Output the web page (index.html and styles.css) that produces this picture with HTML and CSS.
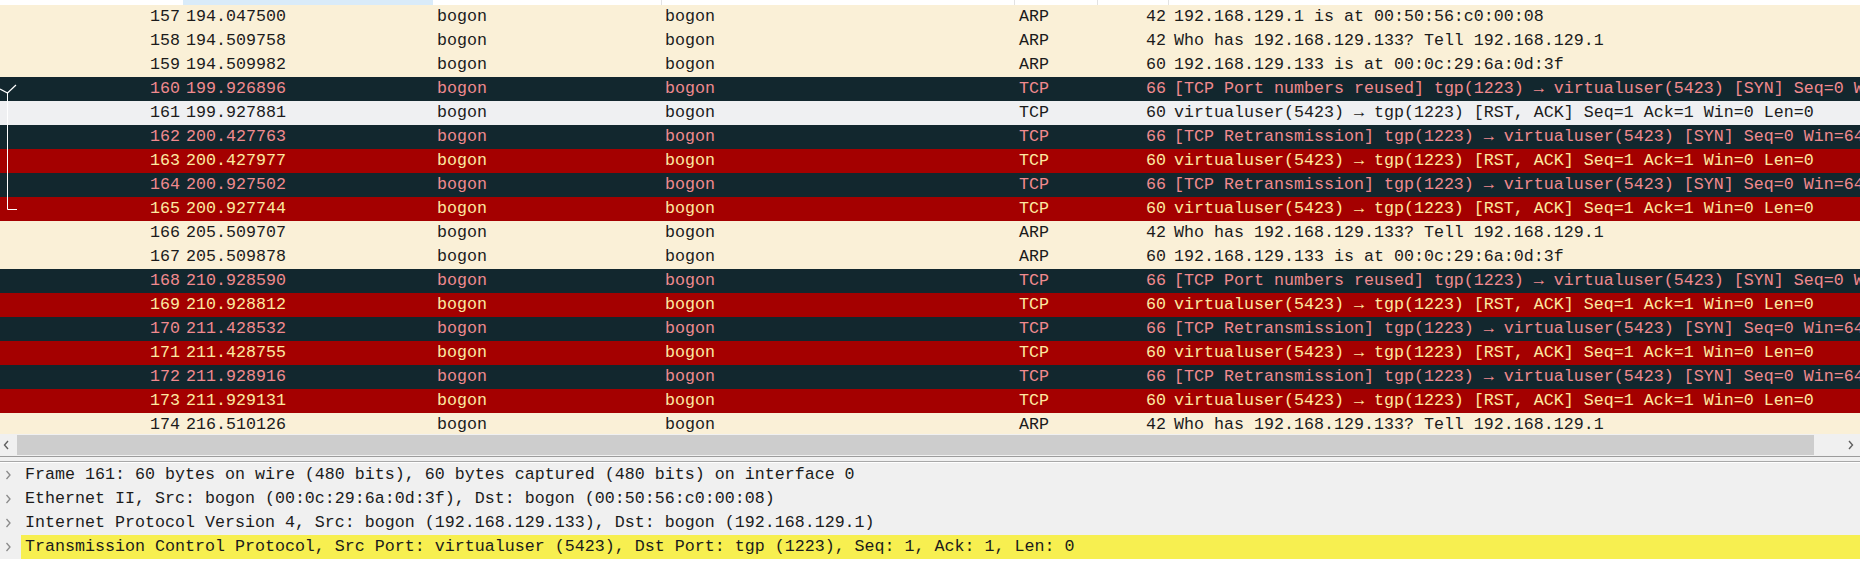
FILE: index.html
```html
<!DOCTYPE html>
<html>
<head>
<meta charset="utf-8">
<link rel="stylesheet" href="styles.css">
</head>
<body>
<div class="packets">
  <div class="cols head">
    <span></span><span class="sorted"></span><span class="sep"></span><span class="sep"></span><span class="sep"></span><span class="sep"></span><span></span>
  </div>
  <div class="cols row arp"><span class="no">157</span><span class="time">194.047500</span><span class="src">bogon</span><span class="dst">bogon</span><span class="proto">ARP</span><span class="len">42</span><span class="info">192.168.129.1 is at 00:50:56:c0:00:08</span></div>
  <div class="cols row arp"><span class="no">158</span><span class="time">194.509758</span><span class="src">bogon</span><span class="dst">bogon</span><span class="proto">ARP</span><span class="len">42</span><span class="info">Who has 192.168.129.133? Tell 192.168.129.1</span></div>
  <div class="cols row arp"><span class="no">159</span><span class="time">194.509982</span><span class="src">bogon</span><span class="dst">bogon</span><span class="proto">ARP</span><span class="len">60</span><span class="info">192.168.129.133 is at 00:0c:29:6a:0d:3f</span></div>
  <div class="cols row bad"><span class="no">160</span><span class="time">199.926896</span><span class="src">bogon</span><span class="dst">bogon</span><span class="proto">TCP</span><span class="len">66</span><span class="info">[TCP Port numbers reused] tgp(1223) → virtualuser(5423) [SYN] Seq=0 Win=64240 Len=0 MSS=1460 WS=256 SACK_PERM</span></div>
  <div class="cols row selected"><span class="no">161</span><span class="time">199.927881</span><span class="src">bogon</span><span class="dst">bogon</span><span class="proto">TCP</span><span class="len">60</span><span class="info">virtualuser(5423) → tgp(1223) [RST, ACK] Seq=1 Ack=1 Win=0 Len=0</span></div>
  <div class="cols row bad"><span class="no">162</span><span class="time">200.427763</span><span class="src">bogon</span><span class="dst">bogon</span><span class="proto">TCP</span><span class="len">66</span><span class="info">[TCP Retransmission] tgp(1223) → virtualuser(5423) [SYN] Seq=0 Win=64240 Len=0 MSS=1460 WS=256 SACK_PERM</span></div>
  <div class="cols row rst"><span class="no">163</span><span class="time">200.427977</span><span class="src">bogon</span><span class="dst">bogon</span><span class="proto">TCP</span><span class="len">60</span><span class="info">virtualuser(5423) → tgp(1223) [RST, ACK] Seq=1 Ack=1 Win=0 Len=0</span></div>
  <div class="cols row bad"><span class="no">164</span><span class="time">200.927502</span><span class="src">bogon</span><span class="dst">bogon</span><span class="proto">TCP</span><span class="len">66</span><span class="info">[TCP Retransmission] tgp(1223) → virtualuser(5423) [SYN] Seq=0 Win=64240 Len=0 MSS=1460 WS=256 SACK_PERM</span></div>
  <div class="cols row rst"><span class="no">165</span><span class="time">200.927744</span><span class="src">bogon</span><span class="dst">bogon</span><span class="proto">TCP</span><span class="len">60</span><span class="info">virtualuser(5423) → tgp(1223) [RST, ACK] Seq=1 Ack=1 Win=0 Len=0</span></div>
  <div class="cols row arp"><span class="no">166</span><span class="time">205.509707</span><span class="src">bogon</span><span class="dst">bogon</span><span class="proto">ARP</span><span class="len">42</span><span class="info">Who has 192.168.129.133? Tell 192.168.129.1</span></div>
  <div class="cols row arp"><span class="no">167</span><span class="time">205.509878</span><span class="src">bogon</span><span class="dst">bogon</span><span class="proto">ARP</span><span class="len">60</span><span class="info">192.168.129.133 is at 00:0c:29:6a:0d:3f</span></div>
  <div class="cols row bad"><span class="no">168</span><span class="time">210.928590</span><span class="src">bogon</span><span class="dst">bogon</span><span class="proto">TCP</span><span class="len">66</span><span class="info">[TCP Port numbers reused] tgp(1223) → virtualuser(5423) [SYN] Seq=0 Win=64240 Len=0 MSS=1460 WS=256 SACK_PERM</span></div>
  <div class="cols row rst"><span class="no">169</span><span class="time">210.928812</span><span class="src">bogon</span><span class="dst">bogon</span><span class="proto">TCP</span><span class="len">60</span><span class="info">virtualuser(5423) → tgp(1223) [RST, ACK] Seq=1 Ack=1 Win=0 Len=0</span></div>
  <div class="cols row bad"><span class="no">170</span><span class="time">211.428532</span><span class="src">bogon</span><span class="dst">bogon</span><span class="proto">TCP</span><span class="len">66</span><span class="info">[TCP Retransmission] tgp(1223) → virtualuser(5423) [SYN] Seq=0 Win=64240 Len=0 MSS=1460 WS=256 SACK_PERM</span></div>
  <div class="cols row rst"><span class="no">171</span><span class="time">211.428755</span><span class="src">bogon</span><span class="dst">bogon</span><span class="proto">TCP</span><span class="len">60</span><span class="info">virtualuser(5423) → tgp(1223) [RST, ACK] Seq=1 Ack=1 Win=0 Len=0</span></div>
  <div class="cols row bad"><span class="no">172</span><span class="time">211.928916</span><span class="src">bogon</span><span class="dst">bogon</span><span class="proto">TCP</span><span class="len">66</span><span class="info">[TCP Retransmission] tgp(1223) → virtualuser(5423) [SYN] Seq=0 Win=64240 Len=0 MSS=1460 WS=256 SACK_PERM</span></div>
  <div class="cols row rst"><span class="no">173</span><span class="time">211.929131</span><span class="src">bogon</span><span class="dst">bogon</span><span class="proto">TCP</span><span class="len">60</span><span class="info">virtualuser(5423) → tgp(1223) [RST, ACK] Seq=1 Ack=1 Win=0 Len=0</span></div>
  <div class="cols row arp"><span class="no">174</span><span class="time">216.510126</span><span class="src">bogon</span><span class="dst">bogon</span><span class="proto">ARP</span><span class="len">42</span><span class="info">Who has 192.168.129.133? Tell 192.168.129.1</span></div>
  <svg class="related" width="20" height="220" viewBox="0 0 20 220">
    <polyline points="0,89 7.5,93 16,85" fill="none" stroke="#ffffff" stroke-width="1.2"/>
    <line x1="7.5" y1="93" x2="7.5" y2="209.5" stroke="#ffffff" stroke-width="1"/>
    <line x1="7.5" y1="209.5" x2="17" y2="209.5" stroke="#ffffff" stroke-width="1"/>
  </svg>
</div>
<div class="hscroll">
  <div class="sbtn"><svg width="17" height="22" viewBox="0 0 17 22"><polyline points="8,7 4.5,11 8,15" fill="none" stroke="#606060" stroke-width="1.4"/></svg></div>
  <div class="thumb"></div>
  <div class="track"></div>
  <div class="sbtn"><svg width="17" height="22" viewBox="0 0 17 22"><polyline points="6,7 9.5,11 6,15" fill="none" stroke="#606060" stroke-width="1.4"/></svg></div>
</div>
<div class="splitter"></div>
<div class="details">
  <div class="drow"><span class="chev"><svg width="21" height="24" viewBox="0 0 21 24"><polyline points="6.5,8 10,12 6.5,16" fill="none" stroke="#8a8a8a" stroke-width="1.3"/></svg></span><span class="dtext">Frame 161: 60 bytes on wire (480 bits), 60 bytes captured (480 bits) on interface 0</span></div>
  <div class="drow"><span class="chev"><svg width="21" height="24" viewBox="0 0 21 24"><polyline points="6.5,8 10,12 6.5,16" fill="none" stroke="#8a8a8a" stroke-width="1.3"/></svg></span><span class="dtext">Ethernet II, Src: bogon (00:0c:29:6a:0d:3f), Dst: bogon (00:50:56:c0:00:08)</span></div>
  <div class="drow"><span class="chev"><svg width="21" height="24" viewBox="0 0 21 24"><polyline points="6.5,8 10,12 6.5,16" fill="none" stroke="#8a8a8a" stroke-width="1.3"/></svg></span><span class="dtext">Internet Protocol Version 4, Src: bogon (192.168.129.133), Dst: bogon (192.168.129.1)</span></div>
  <div class="drow"><span class="chev"><svg width="21" height="24" viewBox="0 0 21 24"><polyline points="6.5,8 10,12 6.5,16" fill="none" stroke="#8a8a8a" stroke-width="1.3"/></svg></span><span class="dtext hl">Transmission Control Protocol, Src Port: virtualuser (5423), Dst Port: tgp (1223), Seq: 1, Ack: 1, Len: 0</span></div>
</div>
</body>
</html>
```
FILE: styles.css
```css
html, body {
  margin: 0;
  padding: 0;
}
body {
  width: 1860px;
  height: 577px;
  overflow: hidden;
  background: #ffffff;
  font-family: "Liberation Mono", "DejaVu Sans Mono", monospace;
  font-size: 16.67px;
  color: #1b1b1b;
}
.packets {
  position: relative;
  height: 434px;
  overflow: hidden;
}
.cols {
  display: grid;
  grid-template-columns: 183px 250px 229px 353px 83px 71px 1fr;
}
.head {
  height: 5px;
  background: #ffffff;
}
.head .sorted {
  background: #d9ebf9;
}
.head .sep {
  box-shadow: inset -1px 0 #e2e2e2;
}
.row {
  height: 24px;
  line-height: 24px;
  white-space: nowrap;
}
.row > span {
  overflow: hidden;
}
.no {
  text-align: right;
  padding-right: 3px;
}
.time {
  padding-left: 3px;
}
.src {
  padding-left: 4px;
}
.dst {
  padding-left: 3px;
}
.proto {
  padding-left: 4px;
}
.len {
  text-align: right;
  padding-right: 3px;
}
.info {
  padding-left: 5px;
}
.arp {
  background: #faf0d7;
  color: #1b1b1b;
}
.bad {
  background: #12272e;
  color: #f08a8e;
}
.rst {
  background: #a40000;
  color: #fde9a0;
}
.selected {
  background: #eff0f2;
  color: #1b1b1b;
}
.related {
  position: absolute;
  left: 0;
  top: 0;
  pointer-events: none;
}
.hscroll {
  display: flex;
  height: 22px;
  background: #f0f0f0;
}
.sbtn {
  width: 17px;
  height: 22px;
  flex: none;
}
.thumb {
  flex: 1;
  margin: 1px 0 1px 0;
  background: #cdcdcd;
}
.track {
  width: 29px;
  flex: none;
}
.splitter {
  height: 4px;
  border-top: 1px solid #9c9c9c;
  border-bottom: 1px solid #a8a8a8;
  background: #f0f0f0;
}
.details {
  padding-top: 1px;
}
.drow {
  display: flex;
  height: 24px;
  line-height: 24px;
  background: #f0f0f0;
  white-space: nowrap;
}
.chev {
  width: 21px;
  flex: none;
  display: flex;
}
.dtext {
  flex: 1;
  padding-left: 4px;
}
.hl {
  background: #f7ef50;
}
```
